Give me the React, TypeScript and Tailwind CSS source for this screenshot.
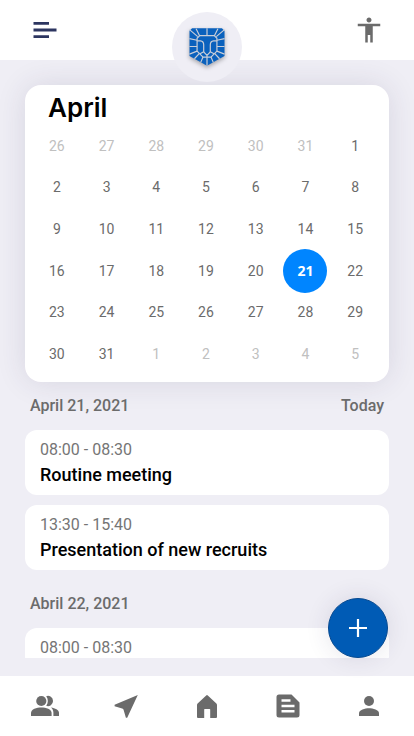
import type { ReactNode } from "react";
import { MdAccessibility } from "react-icons/md";

type Day = { n: number; kind: "muted" | "normal" | "selected" };

const days: Day[] = [
  ...[26, 27, 28, 29, 30, 31].map((n): Day => ({ n, kind: "muted" })),
  ...Array.from({ length: 31 }, (_, i): Day => ({ n: i + 1, kind: i + 1 === 21 ? "selected" : "normal" })),
  ...[1, 2, 3, 4, 5].map((n): Day => ({ n, kind: "muted" })),
];

const dayStyles = {
  muted: "text-[#c0c0c0]",
  normal: "text-[#6b6b6b]",
  selected: "size-11 rounded-full bg-[#0085ff] font-['Open_Sans',sans-serif] font-bold text-white",
};

type EventItem = { time: string; title?: string };

const agenda: { date: string; note?: string; events: EventItem[] }[] = [
  {
    date: "April 21, 2021",
    note: "Today",
    events: [
      { time: "08:00 - 08:30", title: "Routine meeting" },
      { time: "13:30 - 15:40", title: "Presentation of new recruits" },
    ],
  },
  { date: "Abril 22, 2021", events: [{ time: "08:00 - 08:30" }] },
];

function LionLogo() {
  return (
    <svg viewBox="84 78 114 121" className="h-10 w-[38px] drop-shadow-[0_2px_2px_rgba(0,0,0,0.3)]" aria-hidden="true">
      <path d="M96 82H186L194 89V166L141 195L88 166V89Z" fill="#0a61bd" />
      <g fill="none" stroke="#c9ced8" strokeWidth="3.6" strokeLinejoin="round">
        <path d="M88 86L113 107M194 86L169 107M141 82V104M108 83L119 105M174 83L163 105" />
        <path d="M88 113L111 118M194 113L171 118M88 137H111M194 137H171M88 160L111 151M194 160L171 151" />
        <path d="M103 174L118 158M179 174L164 158M122 185L129 169M160 185L153 169M141 195V165" />
        <path d="M119 104H163L171 112V151L153 169H129L111 151V112Z" />
        <path d="M111 120H121Q131 121 131 132V153L120 159M171 120H161Q151 121 151 132V153L162 159" />
        <path d="M131 153L141 164L151 153" />
      </g>
    </svg>
  );
}

function NavButton({ label, children }: { label: string; children: ReactNode }) {
  return (
    <button type="button" aria-label={label} className="flex items-center justify-center text-[#6b6b6b]">
      <svg viewBox="0 0 30 30" className="size-[30px]" fill="currentColor" aria-hidden="true">
        {children}
      </svg>
    </button>
  );
}

export default function App() {
  return (
    <div className="flex h-screen flex-col overflow-hidden bg-[#efeef5] font-['Roboto',sans-serif]">
      <header className="relative z-10 flex h-[60px] shrink-0 items-center justify-between bg-white px-[30px]">
        <button type="button" aria-label="Menu" className="text-[#2c3560]">
          <svg viewBox="0 0 30 30" className="size-[30px]" fill="currentColor" aria-hidden="true">
            <path d="M3.5 7h15.5v2.8H3.5zM3.5 13.6h23v2.8H3.5zM3.5 20.2h15.5v2.8H3.5z" />
          </svg>
        </button>
        <div className="absolute top-3 left-1/2 flex size-[70px] -translate-x-1/2 items-center justify-center rounded-full bg-[#efeef5]">
          <LionLogo />
        </div>
        <button type="button" aria-label="Accessibility" className="text-[#6b6b6b]">
          <MdAccessibility className="size-[30px]" />
        </button>
      </header>

      <main className="relative flex min-h-0 flex-1 flex-col px-[25px] pt-[25px] pb-[18px]">
        <section
          aria-label="April"
          className="shrink-0 rounded-2xl bg-white pt-1.5 pr-[9px] pb-[7px] pl-[7px] shadow-[0_0_30px_rgba(50,40,80,0.12)]"
        >
          <h1 className="pl-4 font-['Inter',sans-serif] text-[26px] leading-[34px] font-semibold text-black">April</h1>
          <div className="grid h-[250px] grid-cols-7 grid-rows-6">
            {days.map((d, i) => (
              <button
                key={i}
                type="button"
                className="flex items-center justify-center text-sm"
              >
                <span className={"flex shrink-0 items-center justify-center " + dayStyles[d.kind]}>{d.n}</span>
              </button>
            ))}
          </div>
        </section>

        <div className="min-h-0 flex-1 overflow-y-auto [scrollbar-width:none]">
          {agenda.map((group) => (
            <section key={group.date}>
              <h2 className="flex h-12 items-center justify-between px-[5px] text-base font-medium text-[#6b6b6b]">
                <span>{group.date}</span>
                {group.note && <span>{group.note}</span>}
              </h2>
              {group.events.map((e) => (
                <article key={e.time} className="mb-2.5 rounded-xl bg-white px-[15px] py-2">
                  <p className="text-base leading-6 text-[#757575]">{e.time}</p>
                  {e.title && <h3 className="text-lg leading-[25px] font-medium text-black">{e.title}</h3>}
                </article>
              ))}
            </section>
          ))}
        </div>

        <button
          type="button"
          aria-label="Add event"
          className="absolute right-[26px] bottom-[18px] flex size-[60px] items-center justify-center rounded-full border border-[#084a90] bg-[#005bb5] text-white shadow-[0_0_24px_rgba(50,40,80,0.12)]"
        >
          <svg viewBox="0 0 20 20" className="size-5" stroke="currentColor" strokeWidth="2.2" aria-hidden="true">
            <path d="M10 1v18M1 10h18" />
          </svg>
        </button>
      </main>

      <nav className="grid h-[60px] shrink-0 grid-cols-5 bg-white px-1">
        <NavButton label="People">
          <circle cx="11.3" cy="10" r="5.1" />
          <path d="M1 25v-3.2c0-3.6 5.6-5.4 10.3-5.4s10.3 1.8 10.3 5.4V25z" />
          <path d="M16.2 5.2a5.1 5.1 0 1 1 0 9.6c2.2-2.8 2.2-6.8 0-9.6zM21 16.6c4 .6 8 2.3 8 5.2V25h-5.6v-3.2c0-2.2-.9-3.9-2.4-5.2z" />
        </NavButton>
        <NavButton label="Location">
          <path d="M26.8 4L16.2 26.8h-1.3l-2.2-7.6c-.3-.9-.7-1.3-1.6-1.6L3.6 15.2v-1.4z" />
        </NavButton>
        <NavButton label="Home">
          <path d="M14.2 4.4a1.2 1.2 0 0 1 1.6 0L24.4 12.6q.6.6.6 1.5V26q0 1-1 1H18.2V18.6q0-.6-.6-.6H12.8q-.6 0-.6.6V27H6q-1 0-1-1V14.1q0-.9.6-1.5z" />
        </NavButton>
        <NavButton label="Notes">
          <path
            fillRule="evenodd"
            d="M6 3.5h12.5L26.5 11.5V24a2.5 2.5 0 0 1-2.5 2.5H6A2.5 2.5 0 0 1 3.5 24V6A2.5 2.5 0 0 1 6 3.5zM8.5 8.2v2.6h9V8.2zM8.5 13.7v2.6h13v-2.6zM8.5 19v2.6h13V19z"
          />
        </NavButton>
        <NavButton label="Profile">
          <circle cx="15" cy="10" r="5" />
          <path d="M5 25v-2.8c0-3.4 6-5 10-5s10 1.6 10 5V25z" />
        </NavButton>
      </nav>
    </div>
  );
}
